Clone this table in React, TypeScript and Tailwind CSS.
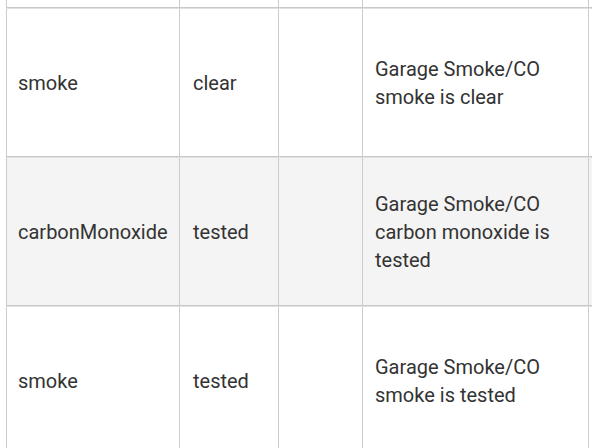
import React from "react";

const rows = [
  { a: "smoke", b: "clear", c: "", d: "Garage Smoke/CO smoke is clear", bg: "bg-white" },
  { a: "carbonMonoxide", b: "tested", c: "", d: "Garage Smoke/CO carbon monoxide is tested", bg: "bg-[#f4f4f4]" },
  { a: "smoke", b: "tested", c: "", d: "Garage Smoke/CO smoke is tested", bg: "bg-white" },
];

function Cells({ a, b, c, d }: { a: string; b: string; c: string; d: string }) {
  return (
    <>
      <div className="w-[173px] shrink-0 border-l border-[#cccccc] flex items-center pl-[11px] pr-3">{a}</div>
      <div className="w-[99px] shrink-0 border-l border-[#cccccc] flex items-center pl-[13px] pr-3">{b}</div>
      <div className="w-[84px] shrink-0 border-l border-[#cccccc] flex items-center px-3">{c}</div>
      <div className="w-[226px] shrink-0 border-l border-[#cccccc] flex items-center px-3">{d}</div>
      <div className="w-[200px] shrink-0 border-l border-[#cccccc]"></div>
    </>
  );
}

export default function App() {
  return (
    <div
      className="w-[592px] h-[448px] overflow-hidden bg-white text-[#333333] text-[20px] leading-[28px]"
      style={{ fontFamily: "Roboto, 'Liberation Sans', sans-serif" }}
    >
      <div className="ml-[6px] w-[800px]">
        <div className="flex h-[8px] border-b border-[#c8c8c8]">
          <div className="w-[173px] shrink-0 border-l border-[#cccccc]"></div>
          <div className="w-[99px] shrink-0 border-l border-[#cccccc]"></div>
          <div className="w-[84px] shrink-0 border-l border-[#cccccc]"></div>
          <div className="w-[226px] shrink-0 border-l border-[#cccccc]"></div>
          <div className="w-[200px] shrink-0 border-l border-[#cccccc]"></div>
        </div>
        {rows.map((r, i) => (
          <div
            key={i}
            className={`flex h-[149px] border-t border-b border-t-[#e0e0e0] border-b-[#c8c8c8] ${r.bg}`}
          >
            <Cells a={r.a} b={r.b} c={r.c} d={r.d} />
          </div>
        ))}
      </div>
    </div>
  );
}
